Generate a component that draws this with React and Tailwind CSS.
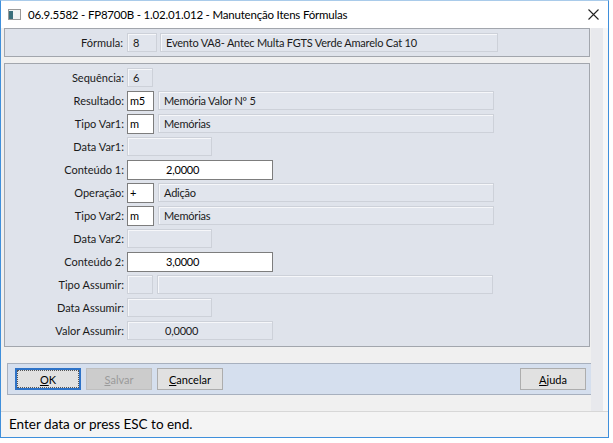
const rows = [
  { label: "Sequência:", fields: [{ w: 26, v: "6", off: true }] },
  { label: "Resultado:", fields: [{ w: 27, v: "m5" }, { w: 336, v: "Memória Valor Nº 5", off: true }] },
  { label: "Tipo Var1:", fields: [{ w: 27, v: "m" }, { w: 336, v: "Memórias", off: true }] },
  { label: "Data Var1:", fields: [{ w: 85, v: "", off: true }] },
  { label: "Conteúdo 1:", fields: [{ w: 146, v: "2,0000", num: true }] },
  { label: "Operação:", fields: [{ w: 27, v: "+" }, { w: 336, v: "Adição", off: true }] },
  { label: "Tipo Var2:", fields: [{ w: 27, v: "m" }, { w: 336, v: "Memórias", off: true }] },
  { label: "Data Var2:", fields: [{ w: 85, v: "", off: true }] },
  { label: "Conteúdo 2:", fields: [{ w: 146, v: "3,0000", num: true }] },
  { label: "Tipo Assumir:", fields: [{ w: 26, v: "", off: true }, { w: 336, v: "", off: true }] },
  { label: "Data Assumir:", fields: [{ w: 85, v: "", off: true }] },
  { label: "Valor Assumir:", fields: [{ w: 146, v: "0,0000", off: true, num: true }] },
];

function Field({ w, v, off, num }) {
  return (
    <div
      style={{ width: w }}
      className={
        "tracking-[-0.2px] " +
        (off
          ? "h-[19px] flex items-center border border-[#cdd1d9] bg-[#e1e5ed] shadow-[inset_1px_1px_0_#f6f7fa] text-[#1a1a1a] " +
            (num ? "pl-[37px]" : "pl-[5px]")
          : "h-[20px] flex items-center border border-[#7d7d7d] bg-white text-black " +
            (num ? "pl-[38px]" : "pl-[2px]"))
      }
    >
      {v}
    </div>
  );
}

function Btn({ children, focus, disabled, className = "" }) {
  return (
    <div
      className={
        "h-[22px] w-[66px] flex items-center justify-center text-[11px] " +
        (focus
          ? "border-2 border-[#2d72c7] bg-[#e1e1e1] text-black "
          : disabled
          ? "border border-[#bfbfbf] bg-[#cccccc] text-[#9a9a9a] "
          : "border border-[#adadad] bg-[#e1e1e1] text-black ") +
        className
      }
    >
      {focus ? (
        <span className="w-full h-full flex items-center justify-center border border-dotted border-[#555]">
          {children}
        </span>
      ) : (
        children
      )}
    </div>
  );
}

export default function App() {
  return (
    <div className="w-[613px] h-[443px] bg-white font-['Lato','Noto_Sans',sans-serif] text-[11px] leading-none">
      <div className="w-[609px] h-[438px] border border-t-[#a9cbea] border-[#3f8fdb] flex flex-col">
        {/* title bar */}
        <div className="h-[27px] flex items-center bg-white shrink-0">
          <svg width="13" height="11" viewBox="0 0 13 11" className="ml-[7px] mr-[7px]">
            <rect x="0.5" y="0.5" width="12" height="10" fill="#f2f2f2" stroke="#9a9a9a" />
            <rect x="1" y="2" width="4" height="8" fill="#3b6e7a" />
          </svg>
          <span className="text-[11.5px] tracking-[-0.2px] text-black">06.9.5582 - FP8700B - 1.02.01.012 - Manutenção Itens Fórmulas</span>
          <svg width="11" height="11" viewBox="0 0 11 11" className="ml-auto mr-[9px]">
            <path d="M0.5 0.5L10.5 10.5M10.5 0.5L0.5 10.5" stroke="#222" strokeWidth="1.1" />
          </svg>
        </div>

        {/* body */}
        <div className="flex-1 flex bg-[#f0f0f0]">
          <div className="w-[590px] pl-[3px] flex flex-col">
            <div className="w-[586px] h-[29px] border border-[#a2a6ad] bg-[#dfe3eb] flex items-center">
              <div className="w-[118px] text-right text-[#1a1a1a]">Fórmula:</div>
              <div className="ml-[4px] flex gap-[3px]">
                <Field w={30} v="8" off />
                <Field w={338} v="Evento VA8- Antec Multa FGTS Verde Amarelo Cat 10" off />
              </div>
            </div>

            <div className="mt-[6px] w-[586px] h-[284px] border border-[#a2a6ad] bg-[#dfe3eb] pt-[2px]">
              {rows.map((r) => (
                <div key={r.label} className="h-[23px] flex items-center">
                  <div className="w-[119px] text-right text-[#1a1a1a]">{r.label}</div>
                  <div className="ml-[3px] flex gap-[4px]">
                    {r.fields.map((f, i) => (
                      <Field key={i} {...f} />
                    ))}
                  </div>
                </div>
              ))}
            </div>

            <div className="mt-[16px] ml-[3px] w-[586px] h-[32px] border border-[#a7b0be] bg-[#d5dfee] flex items-center pl-[7px] pr-[6px] gap-[5px]">
              <Btn focus>
                <u>O</u>K
              </Btn>
              <Btn disabled>
                <u>S</u>alvar
              </Btn>
              <Btn>
                <u>C</u>ancelar
              </Btn>
              <Btn className="ml-auto">
                <u>A</u>juda
              </Btn>
            </div>
          </div>
          <div className="w-[12px] bg-[#e8e9ed]" />
          <div className="flex-1 bg-[#f7f7f7]" />
        </div>

        {/* status bar */}
        <div className="h-[26px] shrink-0 border-t border-[#d7d7d7] bg-[#f4f4f4] flex items-center pl-[8px] text-[13.5px] text-black">
          Enter data or press ESC to end.
        </div>
      </div>
    </div>
  );
}
